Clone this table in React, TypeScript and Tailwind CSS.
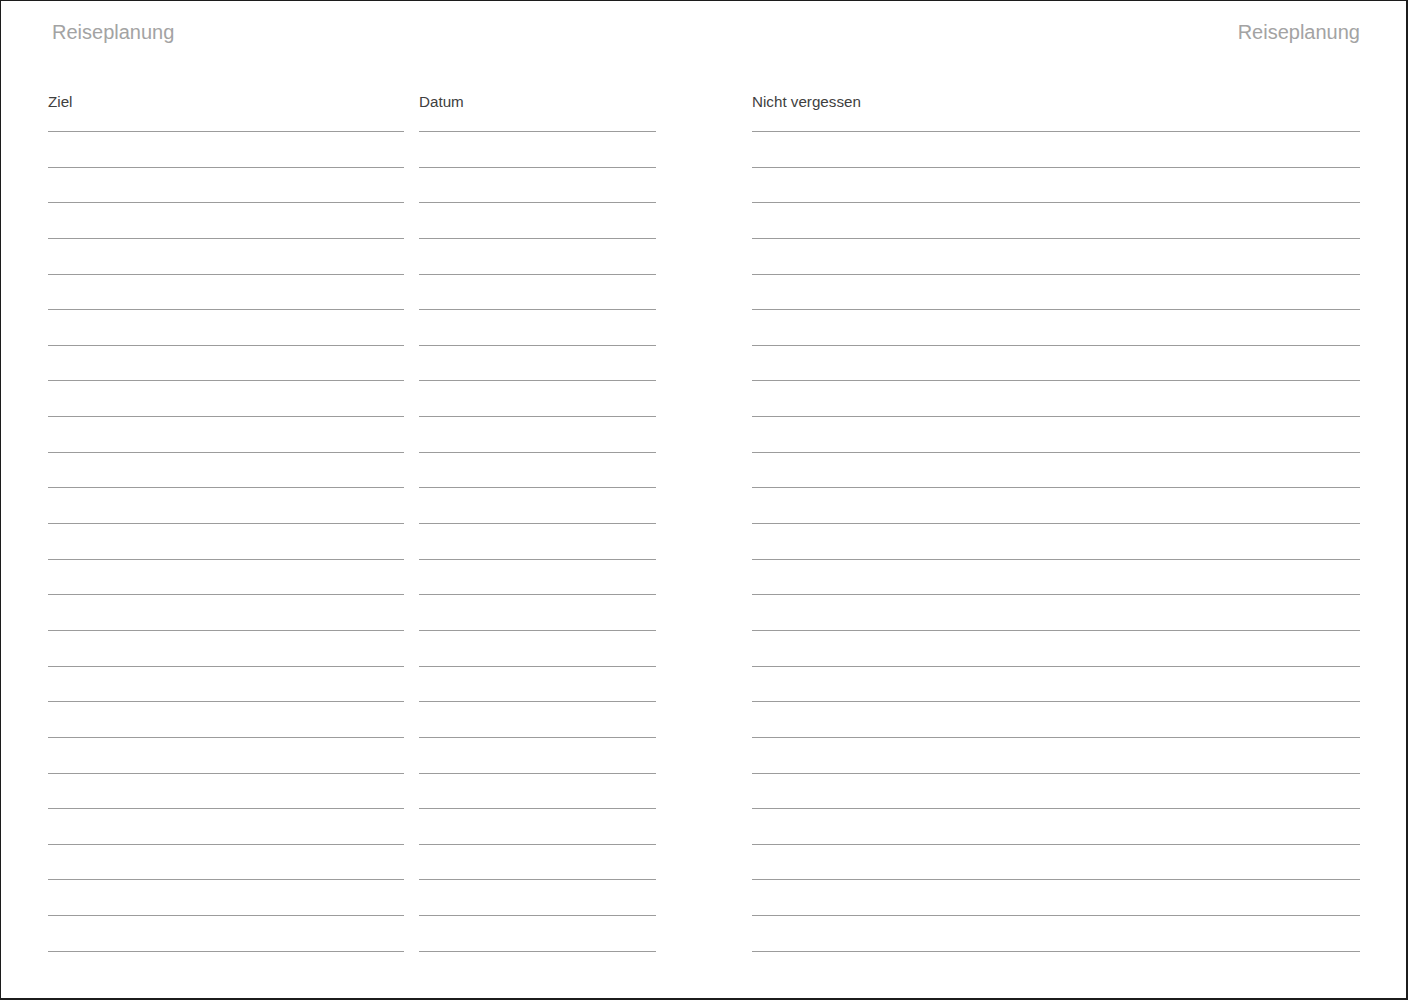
import React from "react";

const ROWS = 23;

function Column({ title, width, className = "" }: { title: string; width: string; className?: string }) {
  return (
    <div className={`flex flex-col ${width} ${className}`}>
      <div className="h-[40px] border-b border-[#9c9c9c] text-[15.2px] leading-[20px] text-[#404040]">{title}</div>
      {Array.from({ length: ROWS }).map((_, i) => (
        <div key={i} className="h-[35.65px] border-b border-[#9c9c9c]" />
      ))}
    </div>
  );
}

export default function App() {
  return (
    <div
      className="w-[1408px] h-[1000px] bg-white border-t border-l border-r-2 border-b-2 border-[#1c1c1c] overflow-hidden"
      style={{ fontFamily: '"Liberation Sans", Arial, sans-serif' }}
    >
      <div className="flex justify-between pt-[19px] pl-[51px] pr-[46px] text-[20px] leading-[24px] text-[#a3a3a3]">
        <span>Reiseplanung</span>
        <span>Reiseplanung</span>
      </div>
      <div className="flex mt-[48px] pl-[47px]">
        <Column title="Ziel" width="w-[356px]" />
        <Column title="Datum" width="w-[237px]" className="ml-[15px]" />
        <Column title="Nicht vergessen" width="w-[608px]" className="ml-[96px]" />
      </div>
    </div>
  );
}
